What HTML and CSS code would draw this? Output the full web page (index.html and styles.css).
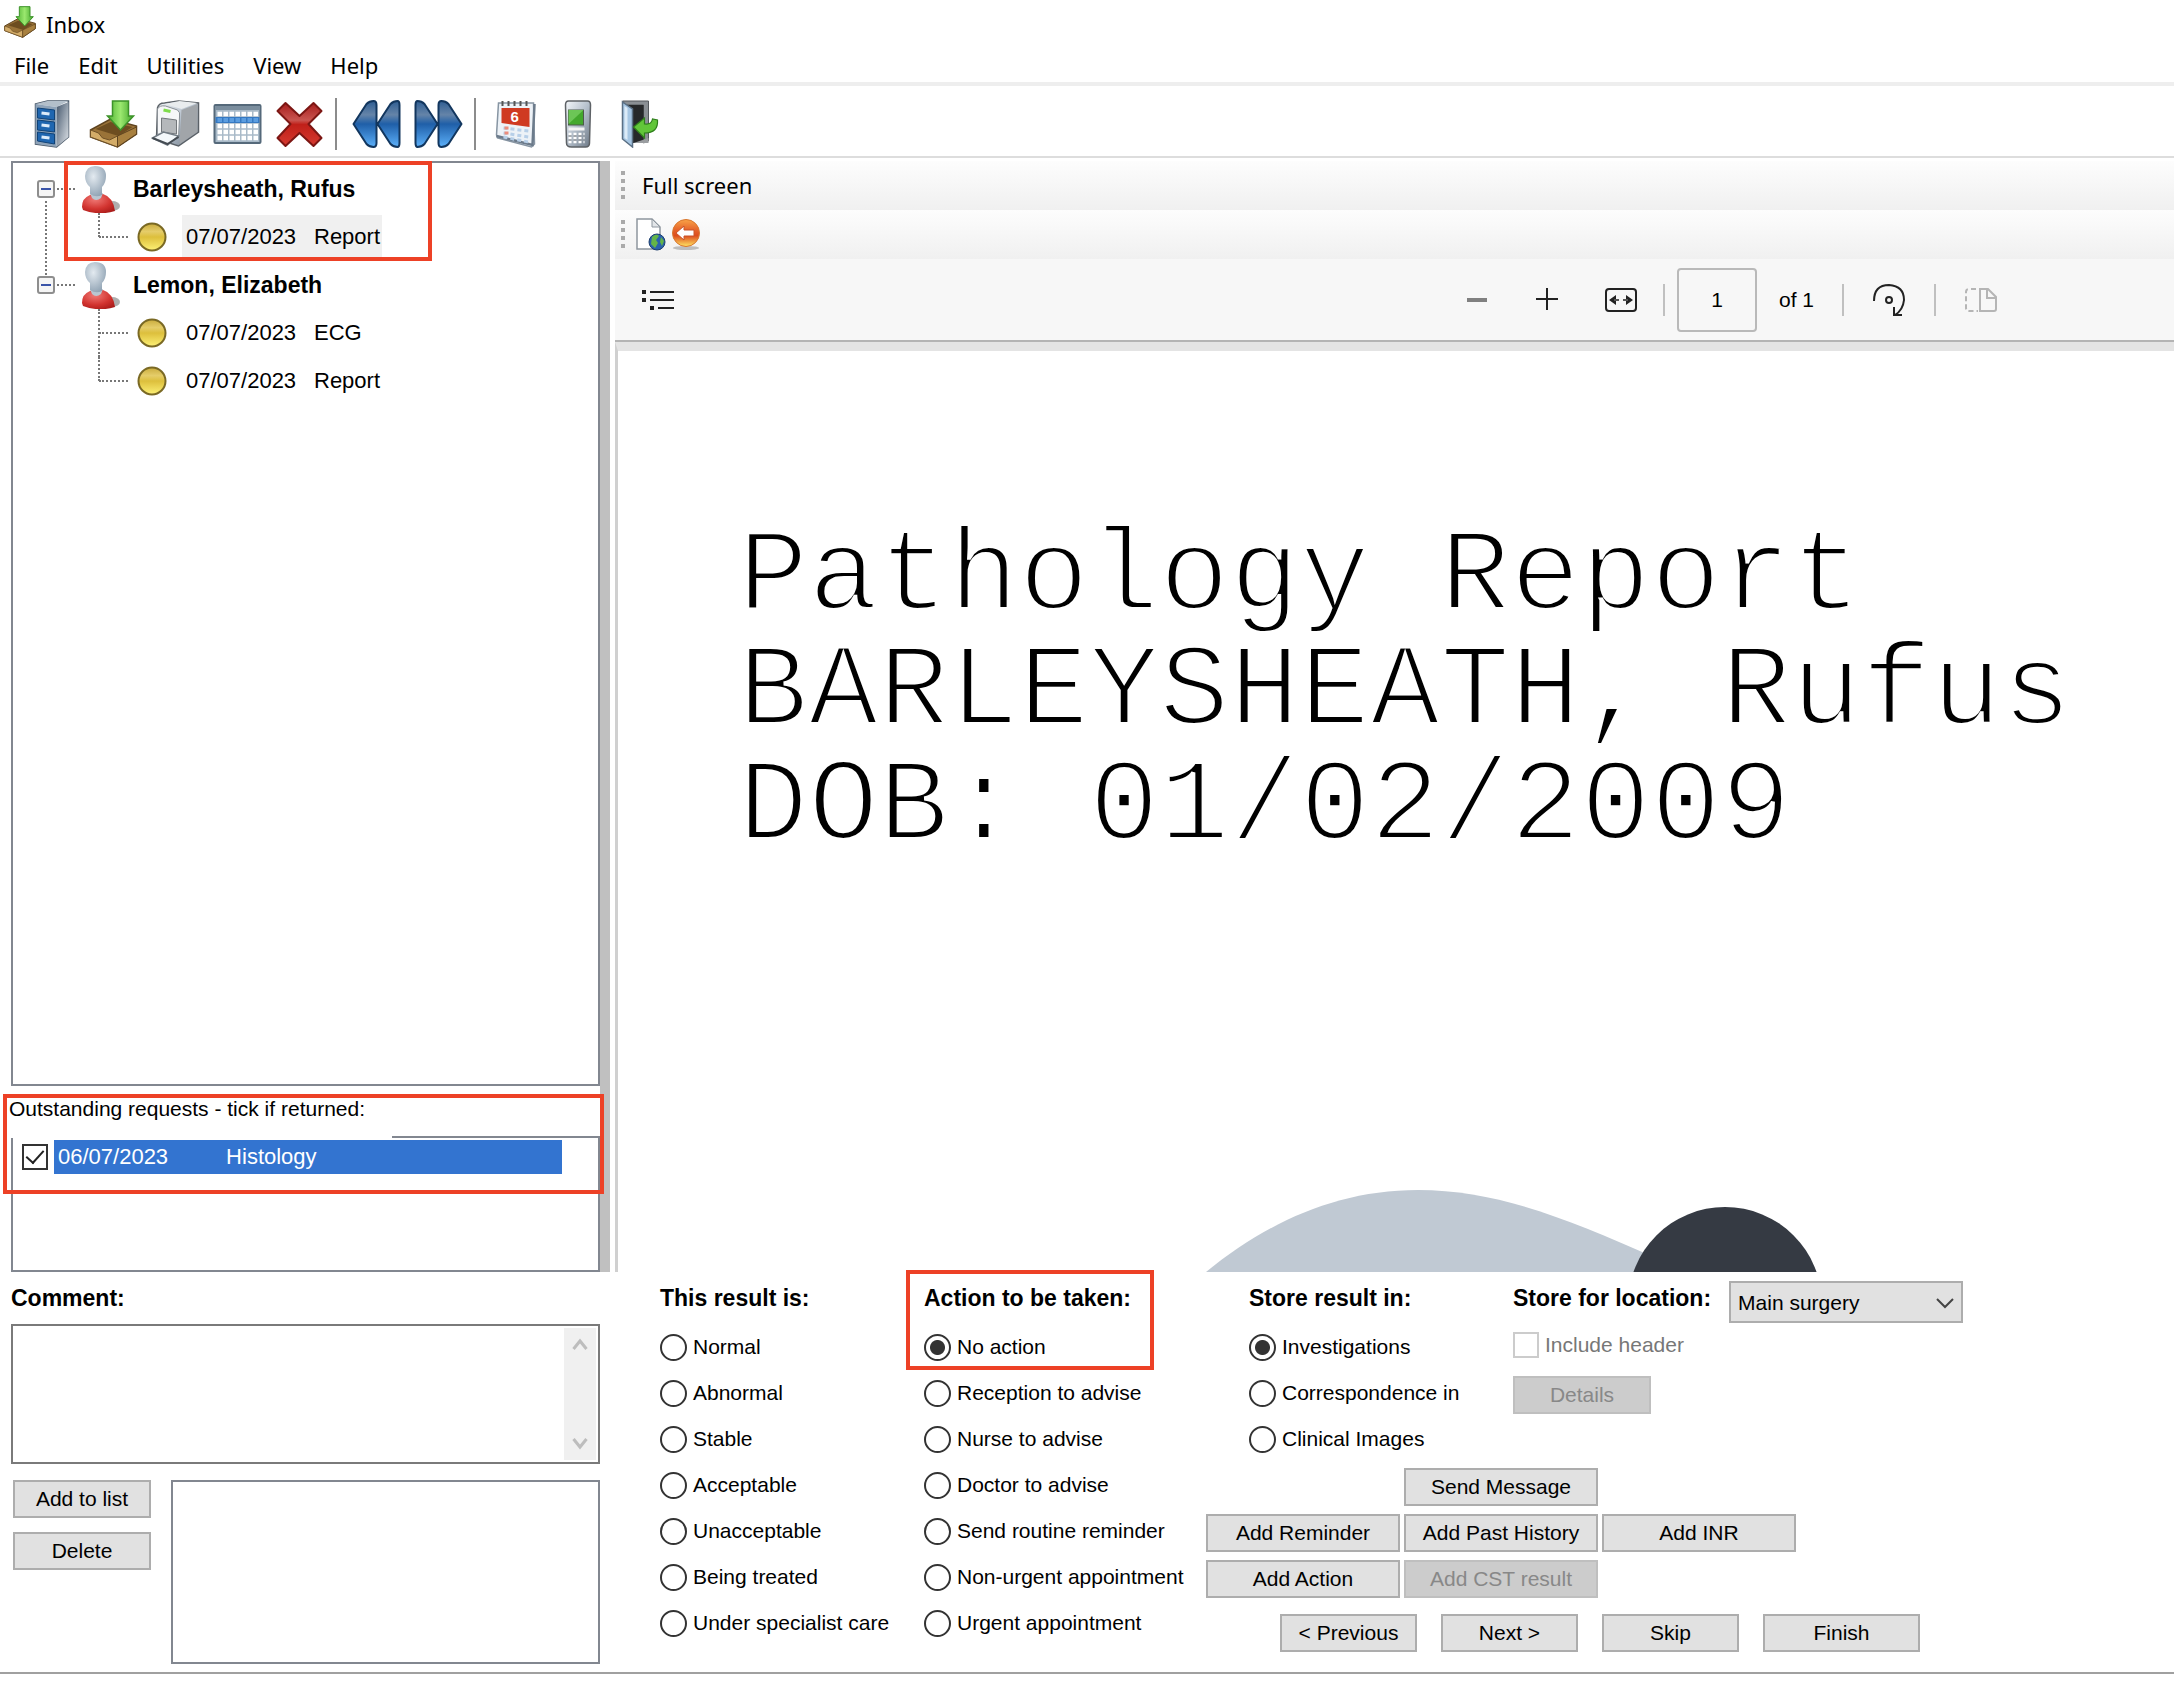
FILE: index.html
```html
<!DOCTYPE html>
<html lang="en">
<head>
  <meta charset="UTF-8">
  <meta name="viewport" content="width=device-width, initial-scale=1.0">
  <title>Inbox</title>
  <link rel="stylesheet" href="styles.css">
</head>
<body>
  <!-- Shared gradients and icons -->
  <svg class="defs" width="0" height="0" aria-hidden="true">
    <defs>
      <linearGradient id="blueArrow" x1="0" y1="0" x2="0" y2="1">
        <stop offset="0" stop-color="#2f5e93"/><stop offset=".3" stop-color="#6584a8"/>
        <stop offset=".5" stop-color="#1f5fa8"/><stop offset="1" stop-color="#5cb0fa"/>
      </linearGradient>
      <linearGradient id="green" x1="0" y1="0" x2="1" y2="0">
        <stop offset="0" stop-color="#4fb332"/><stop offset=".5" stop-color="#9be86f"/><stop offset="1" stop-color="#3fa428"/>
      </linearGradient>
      <linearGradient id="steel" x1="0" y1="0" x2="1" y2="1">
        <stop offset="0" stop-color="#f4f7fa"/><stop offset=".5" stop-color="#b4bfcb"/><stop offset="1" stop-color="#6c7885"/>
      </linearGradient>
      <linearGradient id="steelDark" x1="0" y1="0" x2="1" y2="1">
        <stop offset="0" stop-color="#44566c"/><stop offset=".6" stop-color="#a3adb8"/><stop offset="1" stop-color="#dfe3e8"/>
      </linearGradient>
      <linearGradient id="redCross" x1="0" y1="0" x2="0" y2="1">
        <stop offset="0" stop-color="#a81e1e"/><stop offset=".4" stop-color="#c95550"/>
        <stop offset=".5" stop-color="#c02019"/><stop offset="1" stop-color="#d53a30"/>
      </linearGradient>
      <linearGradient id="gold" x1="0" y1="0" x2="0" y2="1">
        <stop offset="0" stop-color="#c9ab3c"/><stop offset=".3" stop-color="#e5cd6a"/>
        <stop offset=".5" stop-color="#ddbf3c"/><stop offset="1" stop-color="#fdf176"/>
      </linearGradient>
      <linearGradient id="orange" x1="0" y1="0" x2="0" y2="1">
        <stop offset="0" stop-color="#f9a347"/><stop offset=".4" stop-color="#e5622a"/>
        <stop offset=".6" stop-color="#dd4c1c"/><stop offset="1" stop-color="#ffe663"/>
      </linearGradient>
      <radialGradient id="head" cx=".4" cy=".35" r=".7">
        <stop offset="0" stop-color="#e3eaf0"/><stop offset="1" stop-color="#8fa2b3"/>
      </radialGradient>
      <radialGradient id="redBody" cx=".4" cy=".3" r=".8">
        <stop offset="0" stop-color="#f07a76"/><stop offset=".6" stop-color="#d23430"/><stop offset="1" stop-color="#a81a18"/>
      </radialGradient>
    </defs>
    <symbol id="tray" viewBox="0 0 48 48">
      <path d="M1 30 L21 19 L47 26 L47 34 L28 47 L1 37Z" fill="#9a7338" stroke="#5f4420" stroke-width="1.5"/>
      <path d="M6 29 L21 22 L43 27 L29 36Z" fill="#6d4d20"/>
      <path d="M1 30 L9 33 L13 38 L20 40 L28 36 L28 47 L1 37Z" fill="#d3ac68" stroke="#6f5127"/>
      <path d="M28 36 L47 27 L47 34 L28 47Z" fill="#a8803f" stroke="#5f4420"/>
      <path d="M23 1 H39 V16 H44 L31 30 L18 16 H23Z" fill="url(#green)" stroke="#3d9329" stroke-width="1.5"/>
    </symbol>
    <symbol id="person" viewBox="0 0 40 48">
      <ellipse cx="31" cy="41" rx="8" ry="5" fill="#8b8b8b" opacity=".7"/>
      <path d="M1 42 Q1 33 9 30 Q15 27 22 29 Q32 32 34 46 Q18 51 2 45Z" fill="url(#redBody)"/>
      <path d="M9 28 H22 L20 33 Q15 37 11 33Z" fill="#b9c6d1"/>
      <path d="M4 11 Q5 1 14 1 Q25 1 25 11 Q25 18 21 22 V30 Q15 33 9 29 V22 Q4 18 4 11Z" fill="url(#head)"/>
    </symbol>
    <symbol id="bullet" viewBox="0 0 30 30">
      <circle cx="15" cy="15" r="13.5" fill="url(#gold)" stroke="#7a6924" stroke-width="2"/>
    </symbol>
    <symbol id="rewind" viewBox="0 0 48 48">
      <path d="M1 24 L14 4 Q17 1 21 1 Q24 1 24 5 V43 Q24 47 21 47 Q17 47 14 44Z M25 24 L38 4 Q41 1 45 1 Q47 1 47 5 V43 Q47 47 45 47 Q41 47 38 44Z" fill="url(#blueArrow)" stroke="#12365e" stroke-width="2" stroke-linejoin="round"/>
    </symbol>
  </svg>

  <header class="title-bar">
    <svg class="title-icon"><use href="#tray"/></svg>
    <span>Inbox</span>
  </header>

  <nav class="menu-bar">
    <button type="button">File</button>
    <button type="button">Edit</button>
    <button type="button">Utilities</button>
    <button type="button">View</button>
    <button type="button">Help</button>
  </nav>

  <div class="toolbar">
    <button type="button" aria-label="Filing cabinet">
      <svg viewBox="0 0 48 48">
        <path d="M8 4 L20 1 H41 V37 L29 47 L8 44Z" fill="#fff" stroke="#4b5a6a" stroke-width="1.5"/>
        <path d="M8 4 L20 1 H41 L29 7Z" fill="#b3bfca"/>
        <path d="M29 7 L41 2 V37 L29 47Z" fill="url(#steelDark)"/>
        <path d="M8 4 L29 7 V47 L8 44Z" fill="#8fa3b8"/>
        <path d="M10 8 L27 10 V20 L10 18Z M10 20 L27 22 V32 L10 30Z M10 32 L27 34 V44 L10 41Z" fill="#1f66b0" stroke="#114377"/>
        <path d="M14 13 L22 14 M14 25 L22 26 M14 37 L22 38" stroke="#dcebfa" stroke-width="3"/>
      </svg>
    </button>
    <button type="button" aria-label="Inbox"><svg><use href="#tray"/></svg></button>
    <button type="button" aria-label="Print">
      <svg viewBox="0 0 48 48">
        <path d="M6 8 Q7 3 13 3 L27 1 L47 3 V32 L27 46 L5 39Z" fill="url(#steel)" stroke="#5b6167" stroke-width="1.5"/>
        <path d="M13 4 L28 1 L46 3 L30 9Z" fill="#e9ecee"/>
        <path d="M30 10 L46 4 V32 L28 44Z" fill="#a1a5a9"/>
        <path d="M6 9 Q8 5 14 6 L26 10 Q29 12 28 17 L27 38 L6 34Z" fill="#f6f7f8" stroke="#8a9096"/>
        <path d="M10 18 L25 20 V34 L10 32Z" fill="#b5b8bb" stroke="#73777b"/>
        <path d="M12 10 L19 11.500" stroke="#7fdc4b" stroke-width="3"/>
        <path d="M1 38 L12 32 L27 36 L16 45Z" fill="#f4f8fb" stroke="#717b84" stroke-width="1.5"/>
        <path d="M1 38 L16 44 L27 37" fill="none" stroke="#444b52" stroke-width="2"/>
      </svg>
    </button>
    <button type="button" aria-label="Table">
      <svg viewBox="0 0 48 48">
        <rect x="1" y="5" width="46" height="38" rx="1" fill="#a9bac8" stroke="#55697a" stroke-width="2"/>
        <rect x="2" y="6" width="44" height="4" fill="#7b8e9e"/>
        <rect x="2" y="17" width="44" height="6" fill="#3679c2"/>
        <path d="M4 14 H45 M4 26 H45 M4 32 H45 M4 38 H45" stroke="#fff" stroke-width="4.500" stroke-dasharray="4.500 1.500"/>
        <path d="M4 20 H45" stroke="#5b9de0" stroke-width="4" stroke-dasharray="4.500 1.500"/>
      </svg>
    </button>
    <button type="button" aria-label="Delete item">
      <svg viewBox="0 0 48 48">
        <path d="M10 3 L24 16 L38 3 L46 11 L33 24 L46 38 L38 46 L24 33 L10 46 L2 38 L15 24 L2 11Z" fill="url(#redCross)" stroke="#7c1613" stroke-width="2" stroke-linejoin="round"/>
      </svg>
    </button>
    <span class="divider"></span>
    <button type="button" aria-label="Previous patient"><svg><use href="#rewind"/></svg></button>
    <button type="button" aria-label="Next patient"><svg class="flip"><use href="#rewind"/></svg></button>
    <span class="divider"></span>
    <button type="button" aria-label="Calendar">
      <svg viewBox="0 0 48 48">
        <path d="M7 3 H42 L43 44 L40 47 L6 38 L5 35Z" fill="#edf2f7" stroke="#8795a3" stroke-width="1.5"/>
        <path d="M5 36 L41 45 L43 4" fill="none" stroke="#6c7b8b" stroke-width="2.500"/>
        <path d="M10 8 H38 V27 L10 23Z" fill="#cf3a22"/>
        <path d="M11 1 V6 M17 1 V6 M23 1 V6 M29 1 V6 M35 1 V6" stroke="#555" stroke-width="2"/>
        <text class="cal-day" x="19" y="22">6</text>
        <path d="M12 28 L37 31 M12 33 L37 37 M12 37 L37 42" stroke="#b7cfe8" stroke-width="3" stroke-dasharray="4 3"/>
        <path d="M13 28 h4 M13 33 h4" stroke="#ec8d7c" stroke-width="3"/>
      </svg>
    </button>
    <button type="button" aria-label="Phone">
      <svg viewBox="0 0 48 48">
        <path d="M15 1 H34 Q37 1 37 5 L36 43 Q36 47 32 47 H18 Q13 47 13 43 L12 5 Q12 1 15 1Z" fill="url(#steel)" stroke="#5e6266" stroke-width="1.5"/>
        <rect x="15" y="10" width="15" height="15" fill="#43a82d" stroke="#4d5a4b"/>
        <path d="M15 24 L30 10 H15Z" fill="#6cc656"/>
        <path d="M15 29 H31" stroke="#f3f3f3" stroke-width="3"/>
        <path d="M15 34 H31 M15 38 H31 M15 42 H31" stroke="#fff" stroke-width="2.500" stroke-dasharray="3 2"/>
        <path d="M15 36 H31 M15 40 H31" stroke="#888" stroke-dasharray="3 2"/>
      </svg>
    </button>
    <button type="button" aria-label="Exit">
      <svg viewBox="0 0 48 48">
        <path d="M7 1 H33 V41 L28 43 V5 H10Z" fill="#8a8f94" stroke="#55595d"/>
        <rect x="11" y="5" width="17" height="38" fill="#26282a"/>
        <path d="M18 43 H33 V38Z" fill="#9a9da0"/>
        <path d="M7 2 L17 9 V47 L7 39Z" fill="#a6c6e3" stroke="#5b7085" stroke-width="1.5"/>
        <path d="M9 6 L12 8 V40 L9 38Z" fill="#dcebf8"/>
        <path d="M18 27 L29 18 V24 Q36 25 37 19 L42 20 Q43 33 29 33 V38Z" fill="#62c63a" stroke="#2f7f1c" stroke-width="1.2"/>
      </svg>
    </button>
  </div>

  <main class="workspace">
    <aside class="sidebar">
      <ul class="tree">
        <li class="patient">
          <div class="patient-row">
            <button type="button" class="expander" aria-label="Collapse"></button>
            <span class="dash"></span>
            <svg class="person"><use href="#person"/></svg>
            <strong>Barleysheath, Rufus</strong>
          </div>
          <ul>
            <li class="item"><span class="dash"></span><svg class="bullet"><use href="#bullet"/></svg><a href="#" class="selected"><span class="date">07/07/2023</span>Report</a></li>
          </ul>
          <span class="callout callout-patient"></span>
        </li>
        <li class="patient">
          <div class="patient-row">
            <button type="button" class="expander" aria-label="Collapse"></button>
            <span class="dash"></span>
            <svg class="person"><use href="#person"/></svg>
            <strong>Lemon, Elizabeth</strong>
          </div>
          <ul>
            <li class="item"><span class="dash"></span><svg class="bullet"><use href="#bullet"/></svg><a href="#"><span class="date">07/07/2023</span>ECG</a></li>
            <li class="item"><span class="dash"></span><svg class="bullet"><use href="#bullet"/></svg><a href="#"><span class="date">07/07/2023</span>Report</a></li>
          </ul>
        </li>
      </ul>

      <section class="requests">
        <h2>Outstanding requests - tick if returned:</h2>
        <div class="request-list">
          <div class="request">
            <input type="checkbox" id="histology" checked>
            <label for="histology"><span>06/07/2023</span><span>Histology</span></label>
          </div>
        </div>
        <span class="callout callout-requests"></span>
      </section>
    </aside>

    <div class="splitter"></div>

    <section class="viewer">
      <div class="strip"><span class="grip"></span><button type="button">Full screen</button></div>
      <div class="strip">
        <span class="grip"></span>
        <button type="button" aria-label="Open in browser">
          <svg width="32" height="34" viewBox="0 0 32 34">
            <path d="M3 2 H18 L26 10 V32 H3Z" fill="#fff" stroke="#8f979f" stroke-width="1.5"/>
            <path d="M18 2 V10 H26Z" fill="#e3e6e9" stroke="#8f979f"/>
            <circle cx="23" cy="25" r="8" fill="#2a62ad" stroke="#1d3f6e"/>
            <path d="M18 20 Q22 16 25 19 L22 23 L24 26 L21 31 L17 27Z M27 20 L30 24 L28 29 L26 25Z" fill="#64b548"/>
          </svg>
        </button>
        <button type="button" aria-label="Back">
          <svg width="32" height="34" viewBox="0 0 32 34">
            <ellipse cx="16" cy="31" rx="13" ry="2" fill="#999" opacity=".6"/>
            <circle cx="16" cy="16" r="13.500" fill="url(#orange)" stroke="#d8762e"/>
            <path d="M6 16 L14 9 V13 H24 V19 H14 V23Z" fill="#fff" stroke="#c9552b"/>
          </svg>
        </button>
      </div>

      <div class="pdf-bar">
        <button type="button" class="contents" aria-label="Contents">
          <svg width="34" height="24" viewBox="0 0 34 24" stroke="#222" stroke-width="2">
            <path d="M1 4 h4 M1 12 h4 M9 20 h4" stroke-width="4"/>
            <path d="M9 4 H33 M9 12 H33 M17 20 H33"/>
          </svg>
        </button>
        <div class="pdf-tools">
          <button type="button" aria-label="Zoom out"><svg viewBox="0 0 34 34"><path d="M7 17 H27" stroke="#808080" stroke-width="4"/></svg></button>
          <button type="button" class="zoom-in" aria-label="Zoom in"><svg viewBox="0 0 34 34"><path d="M6 16 H28 M17 5 V27" stroke="#222" stroke-width="2"/></svg></button>
          <button type="button" class="fit" aria-label="Fit to width">
            <svg viewBox="0 0 34 34"><rect x="2" y="6" width="30" height="22" rx="3" fill="none" stroke="#222" stroke-width="2"/>
              <path d="M5 17 L12 12 V22Z M29 17 L22 12 V22Z" fill="#222"/><path d="M10 17 H15 M19 17 H24" stroke="#555" stroke-width="2"/></svg>
          </button>
          <span class="pdf-divider"></span>
          <input type="text" value="1" aria-label="Page number">
          <span class="page-count">of 1</span>
          <span class="pdf-divider"></span>
          <button type="button" aria-label="Rotate">
            <svg viewBox="0 0 34 34" fill="none" stroke="#222" stroke-width="2"><path d="M2 18 Q2 2 17 2 Q32 3 32 17 Q31 27 23 32"/><circle cx="17" cy="17" r="3"/><path d="M22 24 V32 H30" /></svg>
          </button>
          <span class="pdf-divider"></span>
          <button type="button" aria-label="Page view" disabled>
            <svg viewBox="0 0 34 34" fill="none" stroke="#b5b5b5" stroke-width="2"><path d="M16 6 H24 L32 14 V26 Q32 28 30 28 H16Z M23 6 V15 H32"/><path d="M12 6 H5 Q2 6 2 9 V25 Q2 28 5 28 H14" stroke-dasharray="5 3"/></svg>
          </button>
        </div>
      </div>

      <div class="pdf-page">
        <p>Pathology Report<br>BARLEYSHEATH, Rufus<br>DOB: 01/02/2009</p>
        <svg class="page-art" width="614" height="84" viewBox="0 0 614 84">
          <path d="M0 84 C60 35 130 2 212 2 C290 2 360 30 450 70 V84Z" fill="#c0c9d3"/>
          <circle cx="519" cy="116" r="97" fill="#353a43"/>
        </svg>
      </div>
    </section>
  </main>

  <form class="filing">
    <section class="comment">
      <h3><label for="comment">Comment:</label></h3>
      <div class="comment-box">
        <textarea id="comment"></textarea>
        <div class="scrollbar">
          <svg viewBox="0 0 16 16"><path d="M1.500 13 L8 5 L14.500 13"/></svg>
          <svg viewBox="0 0 16 16"><path d="M1.500 3 L8 11 L14.500 3"/></svg>
        </div>
      </div>
      <div class="comment-list">
        <div class="comment-buttons">
          <button type="button" class="btn">Add to list</button>
          <button type="button" class="btn">Delete</button>
        </div>
        <div class="list-box"></div>
      </div>
    </section>

    <section class="choices result" role="radiogroup" aria-labelledby="resultTitle">
      <h3 id="resultTitle">This result is:</h3>
      <label><input type="radio" name="result">Normal</label>
      <label><input type="radio" name="result">Abnormal</label>
      <label><input type="radio" name="result">Stable</label>
      <label><input type="radio" name="result">Acceptable</label>
      <label><input type="radio" name="result">Unacceptable</label>
      <label><input type="radio" name="result">Being treated</label>
      <label><input type="radio" name="result">Under specialist care</label>
    </section>

    <section class="choices action" role="radiogroup" aria-labelledby="actionTitle">
      <h3 id="actionTitle">Action to be taken:</h3>
      <label><input type="radio" name="action" checked>No action</label>
      <label><input type="radio" name="action">Reception to advise</label>
      <label><input type="radio" name="action">Nurse to advise</label>
      <label><input type="radio" name="action">Doctor to advise</label>
      <label><input type="radio" name="action">Send routine reminder</label>
      <label><input type="radio" name="action">Non-urgent appointment</label>
      <label><input type="radio" name="action">Urgent appointment</label>
      <span class="callout callout-action"></span>
    </section>

    <section class="store">
      <div class="store-top">
        <div class="choices store-in" role="radiogroup" aria-labelledby="storeTitle">
          <h3 id="storeTitle">Store result in:</h3>
          <label><input type="radio" name="store" checked>Investigations</label>
          <label><input type="radio" name="store">Correspondence in</label>
          <label><input type="radio" name="store">Clinical Images</label>
        </div>
        <div class="location">
          <div class="location-row">
            <h3><label for="location">Store for location:</label></h3>
            <div class="select">
              <select id="location"><option>Main surgery</option></select>
              <svg viewBox="0 0 18 12"><path d="M1 2 L9 10 L17 2"/></svg>
            </div>
          </div>
          <label class="include"><input type="checkbox" disabled>Include header</label>
          <button type="button" class="btn" disabled>Details</button>
        </div>
      </div>
      <div class="add-buttons">
        <button type="button" class="btn send">Send Message</button>
        <button type="button" class="btn">Add Reminder</button>
        <button type="button" class="btn">Add Past History</button>
        <button type="button" class="btn">Add INR</button>
        <button type="button" class="btn">Add Action</button>
        <button type="button" class="btn" disabled>Add CST result</button>
      </div>
      <div class="nav-buttons">
        <button type="button" class="btn">&lt; Previous</button>
        <button type="button" class="btn">Next &gt;</button>
        <button type="button" class="btn">Skip</button>
        <button type="button" class="btn finish">Finish</button>
      </div>
    </section>
  </form>
  <footer class="status"></footer>
</body>
</html>
```
FILE: styles.css
```css
* {
  box-sizing: border-box;
}
body {
  margin: 0;
  min-height: 100vh;
  display: flex;
  flex-direction: column;
  background: #fff;
  color: #000;
  font-family: "Liberation Sans", Arial, sans-serif;
  font-size: 21px;
}
button, input, select, textarea {
  font: inherit;
  color: inherit;
  margin: 0;
}
button {
  padding: 0;
  border: none;
  background: none;
}
ul {
  list-style: none;
  margin: 0;
  padding: 0;
}
h2, h3, p {
  margin: 0;
}
svg {
  display: block;
}
.defs {
  position: absolute;
}

/* Title, menu and toolbar */
.title-bar, .menu-bar, .strip {
  font-family: "Noto Sans", "Open Sans", sans-serif;
  font-size: 22px;
}
.title-bar {
  display: flex;
  align-items: center;
  gap: 10px;
  height: 48px;
  padding-left: 4px;
}
.title-icon {
  width: 32px;
  height: 32px;
  margin-bottom: 4px;
}
.menu-bar {
  display: flex;
  align-items: center;
  gap: 29px;
  height: 38px;
  padding-left: 14px;
  border-bottom: 4px solid #eee;
}
.toolbar {
  display: flex;
  align-items: center;
  padding: 12px 20px 6px;
  border-bottom: 2px solid #ddd;
}
.toolbar button {
  width: 62px;
  display: flex;
  justify-content: center;
}
.toolbar svg {
  width: 49px;
  height: 48px;
}
.toolbar .flip {
  transform: scaleX(-1);
}
.cal-day {
  font: bold 15px "Liberation Sans", sans-serif;
  fill: #fff;
}
.divider {
  width: 2px;
  height: 52px;
  margin: 0 8px 0 5px;
  background: #8c8c8c;
}

/* Patient tree */
.workspace {
  flex: 1;
  display: flex;
  padding-top: 3px;
}
.sidebar {
  width: 600px;
  padding-left: 11px;
  display: flex;
  flex-direction: column;
}
.tree {
  flex: 1;
  padding-top: 2px;
  border: 2px solid #828790;
}
.tree li {
  position: relative;
}
.patient-row, .item {
  display: flex;
  align-items: center;
  height: 48px;
}
.patient-row {
  padding-left: 24px;
}
.patient-row strong {
  margin-left: 12px;
  font-size: 23px;
}
.patient:not(:last-child)::before {
  content: "";
  position: absolute;
  left: 32px;
  top: 36px;
  height: 74px;
  border-left: 2px dotted #777;
}
.expander {
  width: 18px;
  height: 18px;
  border: 2px solid #8e8e8e;
  border-radius: 3px;
  background: linear-gradient(#3a54a8, #3a54a8) center / 10px 2px no-repeat, #f5f5f5;
}
.dash {
  border-top: 2px dotted #777;
}
.patient-row .dash {
  width: 18px;
  margin: 0 6px 0 2px;
}
.person {
  width: 40px;
  height: 48px;
}
.item {
  padding-left: 86px;
  font-size: 22px;
}
.item::before {
  content: "";
  position: absolute;
  left: 85px;
  top: 0;
  height: 48px;
  border-left: 2px dotted #777;
}
.item:last-child::before {
  height: 24px;
}
.item .dash {
  width: 29px;
}
.bullet {
  width: 30px;
  height: 30px;
  margin: 0 15px 0 9px;
}
.item a {
  display: flex;
  width: 200px;
  padding-left: 4px;
  line-height: 44px;
  color: inherit;
  text-decoration: none;
}
.item .date {
  width: 128px;
}
.item .selected {
  background: #f0f0f0;
}

/* Red highlight boxes */
.callout {
  position: absolute;
  border: 4px solid #ed4126;
  pointer-events: none;
}
.callout-patient {
  left: 51px;
  top: -4px;
  width: 368px;
  height: 100px;
}
.callout-requests {
  left: -8px;
  right: -4px;
  top: 8px;
  height: 100px;
}
.callout-action {
  left: -18px;
  top: -2px;
  width: 248px;
  height: 100px;
}

/* Outstanding requests */
.requests {
  position: relative;
}
.requests h2 {
  position: relative;
  width: 383px;
  margin: 4px 0 -2px -2px;
  padding-bottom: 10px;
  font-size: 21px;
  font-weight: normal;
  line-height: 38px;
  background: #fff;
}
.request-list {
  height: 136px;
  padding: 2px 0;
  border: 2px solid #828790;
}
.request {
  display: flex;
  align-items: center;
  gap: 6px;
  padding: 0 36px 0 9px;
}
.request label {
  flex: 1;
  display: flex;
  gap: 58px;
  padding-left: 4px;
  font-size: 22px;
  line-height: 34px;
  color: #fff;
  background: #3374d0;
}
input[type="checkbox"] {
  appearance: none;
  width: 26px;
  height: 26px;
  border: 2px solid #333;
  background: #fff;
}
input[type="checkbox"]:checked::before {
  content: "";
  display: block;
  width: 8px;
  height: 15px;
  margin: 0 auto;
  border: solid #222;
  border-width: 0 2px 2px 0;
  transform: rotate(42deg);
}
input[type="checkbox"]:disabled {
  border-color: #ccc;
}
.splitter {
  width: 10px;
  background: #c0c0c0;
}

/* Document viewer */
.viewer {
  flex: 1;
  display: flex;
  flex-direction: column;
  padding-left: 5px;
}
.strip {
  display: flex;
  align-items: center;
  gap: 4px;
  height: 49px;
  padding: 0 0 2px 6px;
  background: linear-gradient(#fdfdfd, #f0f0f0);
}
.strip .grip {
  width: 4px;
  height: 28px;
  margin-right: 5px;
  background: repeating-linear-gradient(#aaa 0 4px, transparent 4px 8px);
}
.strip .grip + button:last-child {
  margin-left: 8px;
}
.pdf-bar {
  display: flex;
  align-items: center;
  justify-content: space-between;
  height: 83px;
  padding: 0 176px 0 26px;
  border-bottom: 2px solid #b4b4b4;
  background: #f7f7f7;
}
.pdf-tools {
  display: flex;
  align-items: center;
  gap: 28px;
}
.pdf-tools svg {
  width: 34px;
  height: 34px;
}
.pdf-tools .zoom-in {
  margin-left: 8px;
}
.pdf-tools .fit {
  margin-left: 12px;
}
.fit + .pdf-divider {
  margin-left: -3px;
}
.pdf-tools input {
  width: 80px;
  height: 64px;
  margin-left: -16px;
  padding: 0;
  border: 2px solid #b9b9b9;
  border-radius: 4px;
  background: #f7f7f7;
  text-align: center;
}
.page-count {
  margin-left: -6px;
}
.pdf-divider {
  width: 2px;
  height: 32px;
  background: #c0c0c0;
}
.pdf-page {
  flex: 1;
  display: flex;
  flex-direction: column;
  justify-content: space-between;
  border-top: 9px solid #e4e4e4;
  border-left: 3px solid #d0d0d0;
}
/* the white stroke thins the letters */
.pdf-page p {
  padding: 170px 0 0 120px;
  font-family: "Liberation Mono", "Courier New", monospace;
  font-size: 117px;
  line-height: 115px;
  white-space: nowrap;
  -webkit-text-stroke: 4px #fff;
}
.page-art {
  margin-left: 588px;
}

/* Filing form */
.filing {
  display: flex;
}
.filing h3 {
  padding: 10px 0;
  font-size: 23px;
  line-height: 32px;
}
.comment {
  width: 600px;
  margin-right: 60px;
  padding-left: 11px;
}
.comment-box {
  display: flex;
  height: 140px;
  padding: 2px;
  border: 2px solid #7a7a7a;
}
.comment-box textarea {
  flex: 1;
  padding: 4px;
  border: none;
  outline: none;
  resize: none;
}
.scrollbar {
  width: 32px;
  display: flex;
  flex-direction: column;
  align-items: center;
  justify-content: space-between;
  padding: 8px 0;
  background: #f0f0f0;
}
.scrollbar svg {
  width: 16px;
  height: 16px;
  fill: none;
  stroke: #bdbdbd;
  stroke-width: 3;
}
.comment-list {
  display: flex;
  gap: 20px;
  padding: 16px 0 8px 2px;
}
.comment-buttons {
  display: flex;
  flex-direction: column;
  gap: 14px;
  width: 138px;
}
.list-box {
  flex: 1;
  height: 184px;
  border: 2px solid #828790;
}
.btn {
  height: 38px;
  border: 2px solid #adadad;
  background: #e1e1e1;
}
.btn:disabled {
  border-color: #bfbfbf;
  background: #ccc;
  color: #888;
}
.choices {
  position: relative;
}
.choices label {
  display: flex;
  align-items: center;
  gap: 6px;
  height: 46px;
}
.result {
  width: 264px;
}
.action {
  width: 282px;
}
input[type="radio"] {
  appearance: none;
  width: 27px;
  height: 27px;
  border: 2px solid #333;
  border-radius: 50%;
  background: #fff;
}
input[type="radio"]:checked {
  background: radial-gradient(circle, #333 0 7px, #fff 8px);
}
.store-top {
  display: flex;
  padding-left: 43px;
}
.store-in {
  width: 264px;
}
.location {
  display: flex;
  flex-direction: column;
  align-items: flex-start;
}
.location-row {
  display: flex;
  align-items: center;
  gap: 18px;
}
.select {
  position: relative;
}
.select select {
  appearance: none;
  width: 234px;
  height: 42px;
  margin-top: 8px;
  padding-left: 7px;
  border: 2px solid #adadad;
  border-radius: 0;
  background: #e1e1e1;
}
.select svg {
  position: absolute;
  right: 9px;
  top: 24px;
  width: 18px;
  height: 12px;
  fill: none;
  stroke: #444;
  stroke-width: 2;
}
.include {
  display: flex;
  align-items: center;
  gap: 6px;
  height: 42px;
  color: #777;
}
.location .btn {
  width: 138px;
  margin-top: 10px;
}
.add-buttons {
  display: grid;
  grid-template-columns: repeat(3, 194px);
  gap: 8px 4px;
  padding-top: 6px;
}
.add-buttons .send {
  grid-column: 2;
}
.add-buttons .send + .btn {
  grid-column: 1;
}
.nav-buttons {
  display: flex;
  gap: 24px;
  padding: 16px 0 0 74px;
}
.nav-buttons .btn {
  width: 137px;
}
.nav-buttons .finish {
  width: 157px;
}
.status {
  height: 12px;
  border-top: 2px solid #a0a0a0;
}
```
